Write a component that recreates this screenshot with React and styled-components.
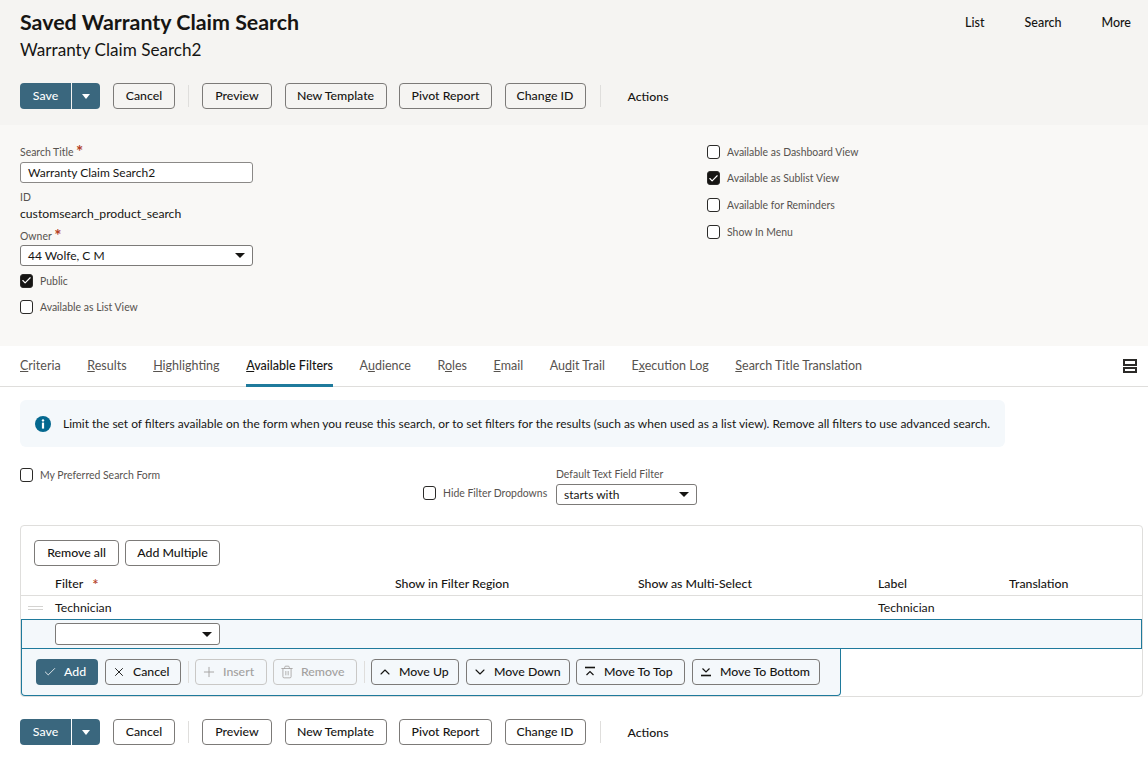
import styled, { createGlobalStyle } from "styled-components";
import { Check, X, Plus, Trash2, ChevronUp, ChevronDown } from "lucide-react";

const FONT = `Lato, "Noto Sans", "Liberation Sans", sans-serif`;

const GlobalStyle = createGlobalStyle`
  html, body {
    margin: 0;
    padding: 0;
    background: #fff;
    overflow: hidden;
  }
  body {
    font-family: ${FONT};
    color: #161513;
  }
  * {
    box-sizing: border-box;
  }
`;

const toolbarButtons = [
  { label: "Preview", w: 70 },
  { label: "New Template", w: 102 },
  { label: "Pivot Report", w: 93 },
  { label: "Change ID", w: 81 },
];

const tabs = [
  { label: "Criteria", key: "C" },
  { label: "Results", key: "R" },
  { label: "Highlighting", key: "H" },
  { label: "Available Filters", key: "A", active: true },
  { label: "Audience", key: "u" },
  { label: "Roles", key: "o" },
  { label: "Email", key: "E" },
  { label: "Audit Trail", key: "d" },
  { label: "Execution Log", key: "x" },
  { label: "Search Title Translation", key: "S" },
];

const Caret = () => (
  <svg width="10" height="5" viewBox="0 0 10 5">
    <path d="M0 0h10L5 5z" fill="currentColor" />
  </svg>
);

const Bar = ({ top }) => (
  <svg width="14" height="14" viewBox="0 0 14 14" fill="none" stroke="currentColor" strokeWidth="1.2">
    {top ? (
      <>
        <path d="M2 2.5h10" strokeWidth="1.6" />
        <path d="M3.5 10l3.5-3.5 3.5 3.5" />
      </>
    ) : (
      <>
        <path d="M3.5 3.5L7 7l3.5-3.5" />
        <path d="M2 10.5h10" strokeWidth="1.6" />
      </>
    )}
  </svg>
);

const Toolbar = () => (
  <ToolbarRow>
    <SplitButton>
      <SaveButton>Save</SaveButton>
      <SaveCaret>
        <svg width="8" height="5" viewBox="0 0 8 5">
          <path d="M0 0h8L4 5z" fill="#fff" />
        </svg>
      </SaveCaret>
    </SplitButton>
    <Button $w={62} $ml={13}>Cancel</Button>
    <Divider $mx={13} />
    {toolbarButtons.map((b, i) => (
      <Button key={b.label} $w={b.w} $ml={i === 0 ? 0 : 12.5}>
        {b.label}
      </Button>
    ))}
    <Divider $mx={14} />
    <ActionsLink>Actions</ActionsLink>
  </ToolbarRow>
);

const TabLabel = ({ label, hotkey }) => {
  const i = label.indexOf(hotkey);
  return (
    <span>
      {label.slice(0, i)}
      <u>{hotkey}</u>
      {label.slice(i + 1)}
    </span>
  );
};

const CheckField = ({ checked, children }) => (
  <CheckRow>
    <CheckBox $checked={checked}>
      {checked && <Check size={11} color="#fff" strokeWidth={2.5} />}
    </CheckBox>
    <CheckLabel>{children}</CheckLabel>
  </CheckRow>
);

export default function App() {
  return (
    <Page>
      <GlobalStyle />
      <Header>
        <HeaderTop>
          <div>
            <Title>Saved Warranty Claim Search</Title>
            <Subtitle>Warranty Claim Search2</Subtitle>
          </div>
          <TopNav>
            <TopLink>List</TopLink>
            <TopLink>Search</TopLink>
            <TopLink>More</TopLink>
          </TopNav>
        </HeaderTop>
        <Toolbar />
      </Header>

      <FormSection>
        <FormColumn>
          <FieldLabel>
            Search Title <Required>*</Required>
          </FieldLabel>
          <TextInput>Warranty Claim Search2</TextInput>
          <FieldLabel $mt={6}>ID</FieldLabel>
          <StaticValue>customsearch_product_search</StaticValue>
          <FieldLabel $mt={7}>
            Owner <Required>*</Required>
          </FieldLabel>
          <SelectBox $w={233}>
            44 Wolfe, C M
            <Caret />
          </SelectBox>
          <CheckStack>
            <CheckField checked>Public</CheckField>
            <CheckField>Available as List View</CheckField>
          </CheckStack>
        </FormColumn>
        <RightChecks>
          <CheckField>Available as Dashboard View</CheckField>
          <CheckField checked>Available as Sublist View</CheckField>
          <CheckField>Available for Reminders</CheckField>
          <CheckField>Show In Menu</CheckField>
        </RightChecks>
      </FormSection>

      <TabBar>
        {tabs.map((t) => (
          <Tab key={t.label} $active={t.active}>
            <TabLabel label={t.label} hotkey={t.key} />
          </Tab>
        ))}
        <TabMenu>
          <span />
          <span />
        </TabMenu>
      </TabBar>

      <Content>
        <InfoBox>
          <InfoIcon width="16" height="16" viewBox="0 0 16 16">
            <circle cx="8" cy="8" r="8" fill="#04688f" />
            <circle cx="8" cy="4.4" r="1.2" fill="#fff" />
            <rect x="6.9" y="6.6" width="2.2" height="6" fill="#fff" />
          </InfoIcon>
          Limit the set of filters available on the form when you reuse this search, or to set filters for
          the results (such as when used as a list view). Remove all filters to use advanced search.
        </InfoBox>

        <FilterOptions>
          <PreferredCell>
            <CheckField>My Preferred Search Form</CheckField>
          </PreferredCell>
          <HideCell>
            <CheckField>Hide Filter Dropdowns</CheckField>
          </HideCell>
          <DefaultCell>
            <SmallLabel>Default Text Field Filter</SmallLabel>
            <SelectBox $w={141}>
              starts with
              <Caret />
            </SelectBox>
          </DefaultCell>
        </FilterOptions>

        <TableCard>
          <TableButtons>
            <Button $w={85}>Remove all</Button>
            <Button $w={95} $ml={6}>Add Multiple</Button>
          </TableButtons>
          <HeadRow>
            <span />
            <span>
              Filter<HeadRequired>*</HeadRequired>
            </span>
            <span>Show in Filter Region</span>
            <span>Show as Multi-Select</span>
            <span>Label</span>
            <span>Translation</span>
          </HeadRow>
          <BodyRow>
            <DragHandle />
            <span>Technician</span>
            <span />
            <span />
            <span>Technician</span>
            <span />
          </BodyRow>
          <EditRow>
            <SelectBox $w={165} $h={22}>
              <span />
              <Caret />
            </SelectBox>
          </EditRow>
          <EditActions>
            <PrimaryButton $w={62}>
              <IconSlot><Check size={14} strokeWidth={1.4} /></IconSlot>
              Add
            </PrimaryButton>
            <Button $w={76} $ml={7} $icon>
              <IconSlot><X size={14} strokeWidth={1.6} /></IconSlot>
              Cancel
            </Button>
            <Divider $mx={6.5} />
            <Button $w={72} $icon disabled>
              <IconSlot><Plus size={16} strokeWidth={1.4} /></IconSlot>
              Insert
            </Button>
            <Button $w={84} $ml={6} $icon disabled>
              <IconSlot><Trash2 size={14} strokeWidth={1.4} /></IconSlot>
              Remove
            </Button>
            <Divider $mx={6.5} />
            <Button $w={88} $icon>
              <IconSlot><ChevronUp size={16} strokeWidth={1.6} /></IconSlot>
              Move Up
            </Button>
            <Button $w={104} $ml={7} $icon>
              <IconSlot><ChevronDown size={16} strokeWidth={1.6} /></IconSlot>
              Move Down
            </Button>
            <Button $w={109} $ml={6} $icon>
              <IconSlot><Bar top /></IconSlot>
              Move To Top
            </Button>
            <Button $w={128} $ml={7} $icon>
              <IconSlot><Bar /></IconSlot>
              Move To Bottom
            </Button>
          </EditActions>
        </TableCard>

        <BottomBar>
          <Toolbar />
        </BottomBar>
      </Content>
    </Page>
  );
}

const Page = styled.div`
  width: 1148px;
  height: 764px;
  overflow: hidden;
  font-size: 12.3px;
`;

const Header = styled.header`
  height: 125px;
  padding: 9px 20px 0;
  background: #f5f4f2;
`;

const HeaderTop = styled.div`
  display: flex;
  justify-content: space-between;
  height: 74px;
`;

const Title = styled.h1`
  margin: 0;
  font-size: 21.4px;
  line-height: 26px;
  font-weight: 700;
`;

const Subtitle = styled.div`
  margin-top: 3px;
  font-size: 17.15px;
  line-height: 24px;
`;

const TopNav = styled.nav`
  display: flex;
  gap: 40px;
  margin-right: -3px;
  padding-top: 5px;
`;

const TopLink = styled.span`
  font-size: 12.5px;
  line-height: 18px;
  font-weight: 500;
`;

const ToolbarRow = styled.div`
  display: flex;
  align-items: center;
  height: 26px;
`;

const SplitButton = styled.div`
  display: flex;
  gap: 1px;
  width: 80px;
  height: 26px;
`;

const SaveButton = styled.button`
  width: 51px;
  padding: 0 0 2px;
  border: 0;
  border-radius: 4px 0 0 4px;
  background: #3a677e;
  color: #fff;
  font: 500 12.3px ${FONT};
`;

const SaveCaret = styled.button`
  display: flex;
  align-items: center;
  justify-content: center;
  flex: 1;
  padding: 0;
  border: 0;
  border-radius: 0 4px 4px 0;
  background: #3a677e;
`;

const Button = styled.button`
  display: inline-flex;
  align-items: center;
  justify-content: ${(p) => (p.$icon ? "flex-start" : "center")};
  gap: 6px;
  flex: none;
  width: ${(p) => p.$w}px;
  height: 26px;
  margin-left: ${(p) => p.$ml || 0}px;
  padding: ${(p) => (p.$icon ? "0 0 1px 5px" : "0 0 2px")};
  border: 1px solid ${(p) => (p.disabled ? "#c9c8c6" : "#7c7a78")};
  border-radius: 4px;
  background: transparent;
  color: ${(p) => (p.disabled ? "#a3a19f" : "#161513")};
  font: 500 12.3px ${FONT};
`;

const PrimaryButton = styled.button`
  display: inline-flex;
  align-items: center;
  justify-content: flex-start;
  gap: 6px;
  flex: none;
  width: ${(p) => p.$w}px;
  height: 26px;
  padding: 0 0 1px 6px;
  border: 0;
  border-radius: 4px;
  background: #3a677e;
  color: #fff;
  font: 500 12.3px ${FONT};
`;

const IconSlot = styled.span`
  display: flex;
  align-items: center;
  justify-content: center;
  flex: none;
  width: 16px;
`;

const Divider = styled.span`
  flex: none;
  width: 1px;
  height: 22px;
  margin: 0 ${(p) => p.$mx}px;
  background: #dfdedc;
`;

const ActionsLink = styled.span`
  margin-left: 13px;
  font-size: 12.3px;
  font-weight: 500;
`;

const FormSection = styled.section`
  display: grid;
  grid-template-columns: 687px 1fr;
  height: 221px;
  padding: 19px 20px 0;
  background: #f9f8f6;
`;

const FormColumn = styled.div`
  display: flex;
  flex-direction: column;
  align-items: flex-start;
`;

const FieldLabel = styled.label`
  margin-top: ${(p) => p.$mt || 0}px;
  font-size: 10.45px;
  line-height: 17px;
  color: #57534f;
`;

const Required = styled.span`
  color: #b3401f;
  font-size: 17px;
  line-height: 0;
  font-weight: 700;
  vertical-align: -2px;
`;

const TextInput = styled.div`
  display: flex;
  align-items: center;
  flex: none;
  width: 233px;
  height: 21px;
  margin-top: 1px;
  padding: 0 7px;
  border: 1px solid #8b8987;
  border-radius: 3px;
  background: #fff;
  font-size: 12px;
`;

const StaticValue = styled.div`
  font-size: 12.2px;
  line-height: 15px;
`;

const SelectBox = styled.div`
  display: flex;
  align-items: center;
  justify-content: space-between;
  width: ${(p) => p.$w}px;
  height: ${(p) => p.$h || 21}px;
  padding: 0 7px;
  border: 1px solid #7c7a78;
  border-radius: 3px;
  background: #fff;
  font-size: 12px;
`;

const CheckStack = styled.div`
  display: flex;
  flex-direction: column;
  gap: 13px;
  margin-top: 8px;
`;

const RightChecks = styled.div`
  display: flex;
  flex-direction: column;
  gap: 13.7px;
  padding-top: 1.3px;
`;

const CheckRow = styled.div`
  display: flex;
  align-items: center;
  gap: 7px;
  height: 13px;
`;

const CheckBox = styled.span`
  display: flex;
  align-items: center;
  justify-content: center;
  flex: none;
  width: 13px;
  height: 14px;
  border: 1px solid #2b2a28;
  border-radius: 3px;
  background: ${(p) => (p.$checked ? "#161513" : "#fff")};
`;

const CheckLabel = styled.span`
  font-size: 10.45px;
  color: #57534f;
  white-space: nowrap;
`;

const TabBar = styled.nav`
  display: flex;
  align-items: stretch;
  gap: 26.6px;
  height: 41px;
  padding: 0 20px;
  border-bottom: 1px solid #dfdedc;
`;

const Tab = styled.span`
  display: flex;
  align-items: center;
  margin-bottom: -1px;
  font-size: 12.5px;
  font-weight: ${(p) => (p.$active ? 500 : 400)};
  color: ${(p) => (p.$active ? "#161513" : "#57534f")};
  border-bottom: 3px solid ${(p) => (p.$active ? "#1f7a9c" : "transparent")};
`;

const TabMenu = styled.span`
  display: flex;
  flex-direction: column;
  align-self: center;
  gap: 1px;
  margin-left: auto;
  margin-right: -9px;

  span {
    display: block;
    width: 14px;
    height: 6.5px;
    border: 2px solid #2b2a28;
    background: #fff;
  }
`;

const Content = styled.main`
  padding: 13px 5px 0 20px;
`;

const InfoBox = styled.div`
  display: flex;
  align-items: center;
  gap: 12px;
  width: 985px;
  height: 47px;
  padding-left: 15px;
  border-radius: 6px;
  background: #f4f8fb;
  font-size: 11.96px;
  white-space: nowrap;
`;

const InfoIcon = styled.svg`
  flex: none;
`;

const FilterOptions = styled.div`
  display: grid;
  grid-template-columns: 403px 133px 141px;
  height: 78px;
  padding-top: 20px;
`;

const PreferredCell = styled.div`
  padding-top: 1px;
`;

const HideCell = styled.div`
  padding-top: 19.5px;
`;

const DefaultCell = styled.div`
  display: flex;
  flex-direction: column;
  gap: 3px;
`;

const SmallLabel = styled.span`
  font-size: 10.45px;
  line-height: 14px;
  color: #57534f;
  white-space: nowrap;
`;

const TableCard = styled.section`
  height: 172px;
  border: 1px solid #dfdedc;
  border-radius: 4px;
`;

const TableButtons = styled.div`
  display: flex;
  height: 41px;
  padding: 14px 0 0 13px;
`;

const rowColumns = "34px 340px 243px 240px 131px 1fr";

const HeadRow = styled.div`
  display: grid;
  grid-template-columns: ${rowColumns};
  align-items: center;
  height: 29px;
  padding-top: 4px;
  border-bottom: 1px solid #dfdedc;
  font-size: 12.3px;
  font-weight: 500;
`;

const HeadRequired = styled.span`
  margin-left: 9px;
  font-size: 15px;
  line-height: 0;
  color: #b3401f;
  vertical-align: -2px;
`;

const BodyRow = styled.div`
  display: grid;
  grid-template-columns: ${rowColumns};
  align-items: center;
  height: 23px;
  font-size: 12.3px;
`;

const DragHandle = styled.span`
  width: 15px;
  height: 4px;
  margin-left: 7px;
  border-top: 1px solid #d4d3d1;
  border-bottom: 1px solid #d4d3d1;
`;

const EditRow = styled.div`
  display: flex;
  align-items: center;
  height: 30px;
  padding-left: 33px;
  border: 1px solid #1f7a9c;
  background: #f4f8fb;
`;

const EditActions = styled.div`
  display: flex;
  align-items: center;
  width: 820px;
  height: 47px;
  padding: 0 0 0 14px;
  border: 1px solid #1f7a9c;
  border-top: 0;
  border-radius: 0 0 4px 4px;
  background: #f4f8fb;
`;

const BottomBar = styled.div`
  margin-top: 22px;
`;
